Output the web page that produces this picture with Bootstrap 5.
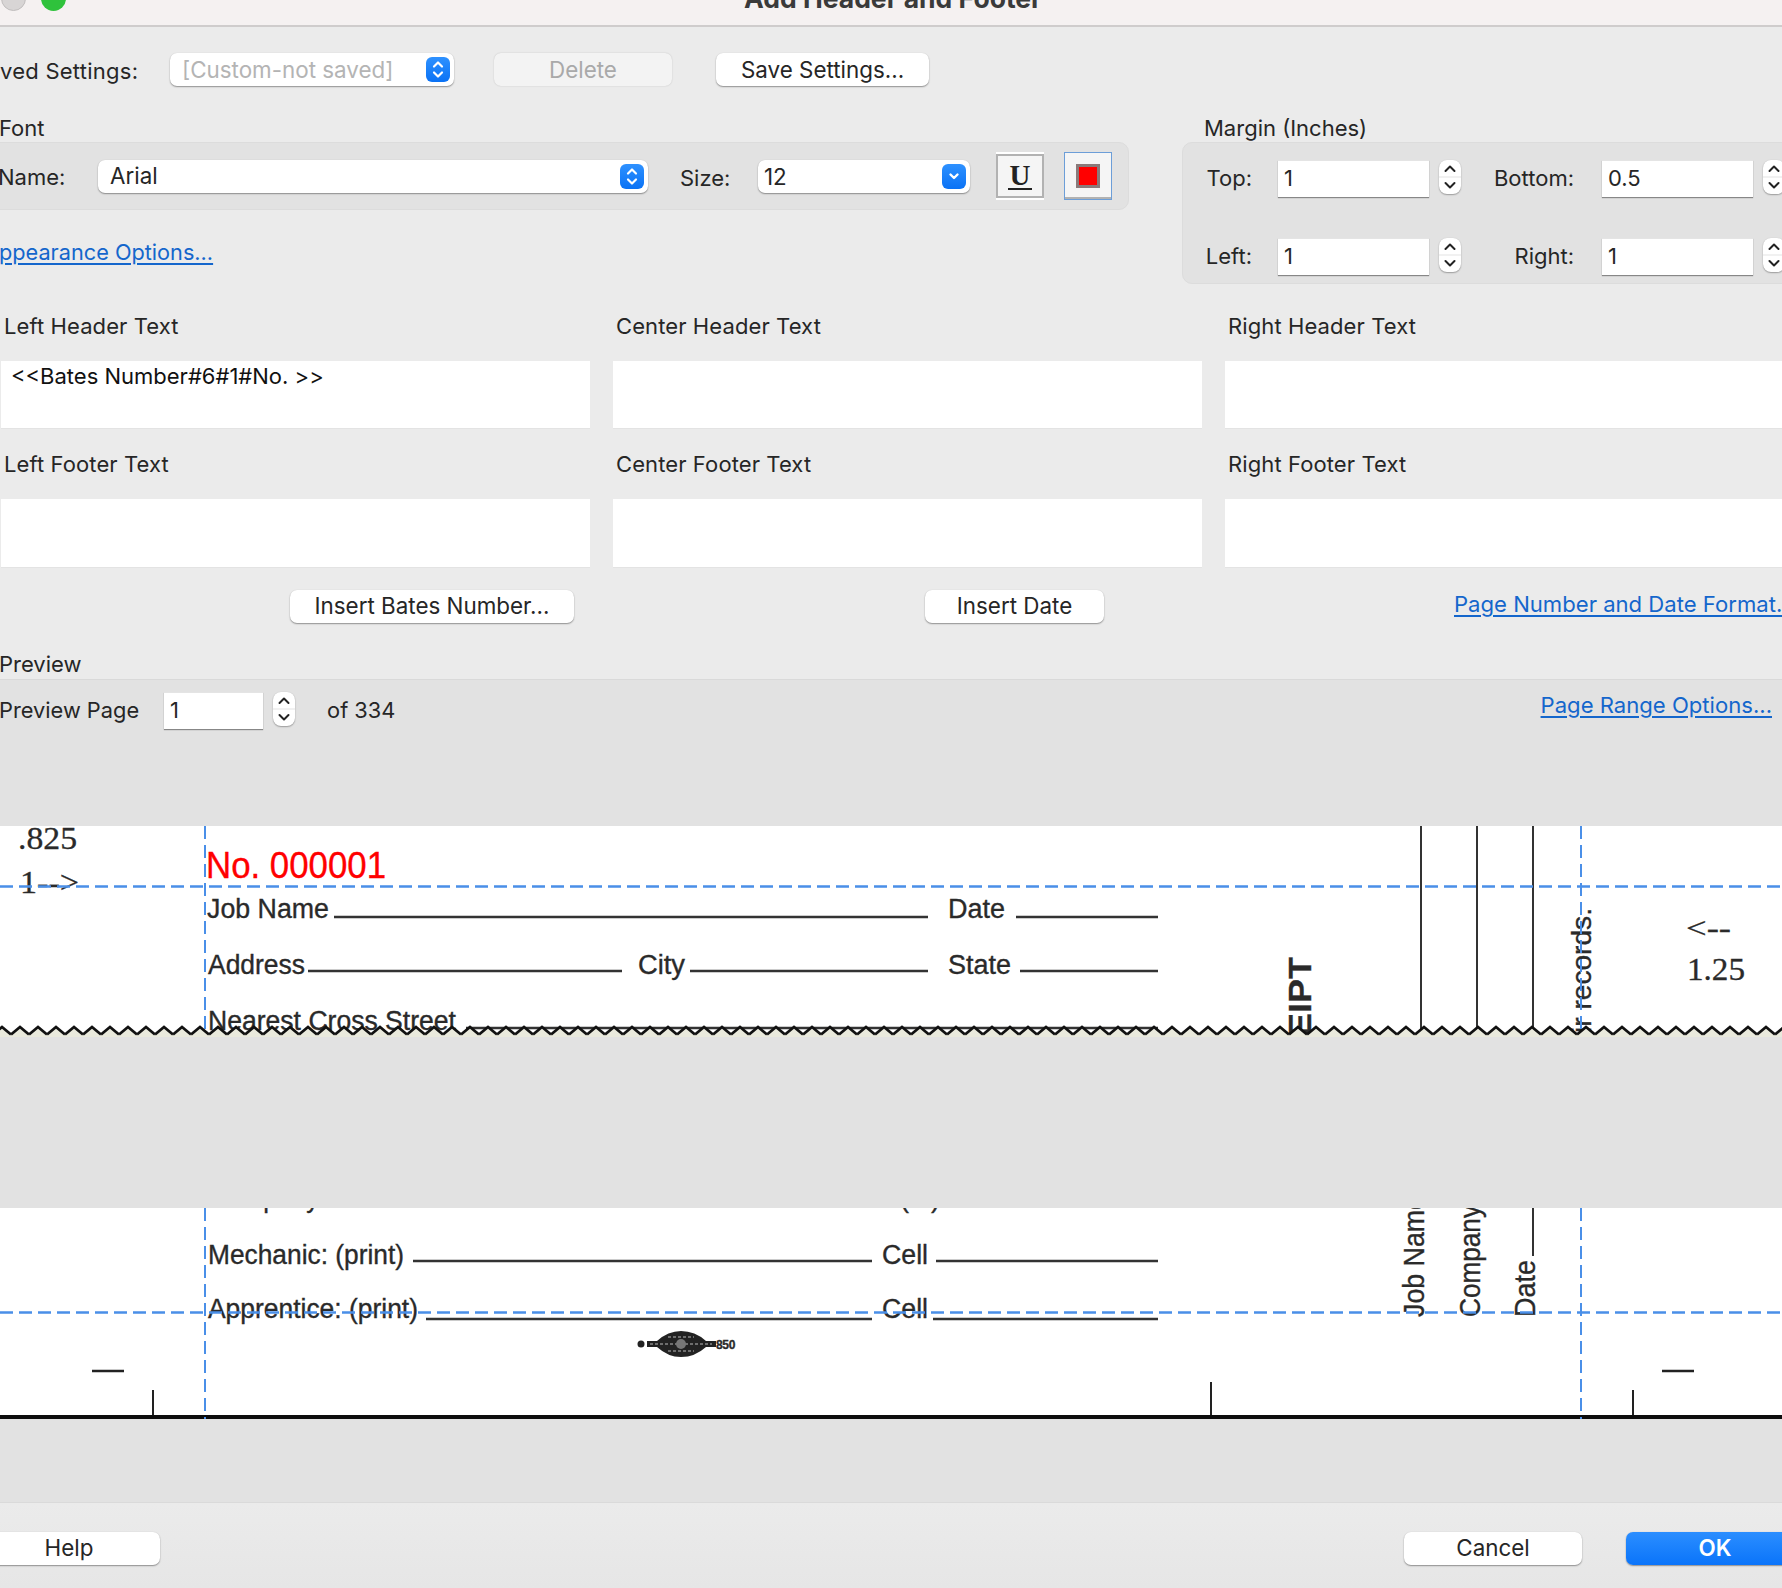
<!DOCTYPE html>
<html lang="en">
<head>
<meta charset="utf-8">
<title>Add Header and Footer</title>
<link href="https://cdn.jsdelivr.net/npm/bootstrap@5.3.0/dist/css/bootstrap.min.css" rel="stylesheet">
<style>
html,body{margin:0;width:1782px;height:1588px;overflow:hidden;background:#ebebeb;}
body{font-family:Inter,"Liberation Sans",sans-serif;font-size:22px;color:#262626;line-height:1.2;}
.dlg-title{height:27px;background:#f5f1f1;border-bottom:2px solid #cfcccc;position:relative;overflow:hidden;}
.dlg-title-text{font-weight:700;font-size:26.500px;color:#3a3a3a;line-height:26px;margin-top:-15px;text-align:center;padding-left:4px;}
.light{position:absolute;width:25px;height:25px;border-radius:50%;top:-14px;}
.light-a{left:1px;background:#d8d5d5;border:1px solid #c0bdbd;}
.light-b{left:41px;background:#2fc23c;}
.top-row{height:33px;margin-top:26px;}
.top-row .mac-btn{padding-top:2px;}
.top-row .popup{padding-top:0;}
.top-row .popup-off{padding-top:2px;}
.lbl-saved{width:170px;padding-top:4px;letter-spacing:.25px;}
.mac-btn{display:flex;flex:none;align-items:center;justify-content:center;height:33px;background:#fff;color:#262626;border:0;border-radius:7px;padding:0;font-size:22.400px;white-space:nowrap;box-shadow:0 1px 1.500px rgba(0,0,0,.38),0 0 1px rgba(0,0,0,.12);}
.mac-btn:disabled{background:#f3f3f3;color:#a9a9a9;opacity:1;box-shadow:0 0 1.500px rgba(0,0,0,.2);}
.w-saved{width:284px;}.w-del{width:178px;margin-left:40px;}.w-save{width:213px;margin-left:44px;}
.popup{justify-content:space-between;padding:0 4px 0 12px;}
.popup-off{color:#b4b4b4;}
.blue-cap{width:24px;height:25px;border-radius:6px;background:linear-gradient(#2e91ff,#0a72f5);display:flex;align-items:center;justify-content:center;}
.mid-row{margin-top:30px;}
.col-font{width:1129px;flex:none;}
.sec-lbl{height:26px;line-height:24px;}
.font-lbl{margin-left:-1px;}
.font-panel{height:68px;margin-left:-11px;padding-left:10px;background:#e2e2e2;border:1px solid #dcdcdc;border-radius:10px;}
.name-lbl{width:100px;margin-left:-2px;padding-top:3px;}
.w-name{width:550px;}
.w-name span:first-child{padding-top:1px;}
.size-lbl{margin-left:32px;width:78px;padding-top:4px;}
.w-size{width:212px;padding-left:2px;}
.size-val{padding-left:4px;padding-top:3px;}
.tool-btn{width:48px;height:48px;background:#f5f5f5;display:flex;flex-direction:column;align-items:center;justify-content:center;padding:0;flex:none;}
.tool-u{margin-left:26px;border:0;border-top:2px solid #fff;border-bottom:2px solid #fff;box-shadow:inset 0 0 0 2px #b2b2b2;}
.tool-u-glyph{font-family:"Liberation Serif",serif;font-weight:700;font-size:29px;line-height:25px;color:#222;border-bottom:2px solid #222;width:24px;text-align:center;}
.tool-c{margin-left:20px;border:1px solid #6c9ed8;box-shadow:inset 0 -2px 0 #b2b2b2;}
.swatch{width:24px;height:24px;background:#f00;border:3px solid #8a7a7a;}
.app-link{display:block;margin-top:29px;margin-left:-1px;line-height:26px;font-size:21.700px;}
a.lnk{color:#1466cc;text-decoration:underline;text-underline-offset:3px;white-space:nowrap;}
.col-margin{margin-left:53px;width:640px;flex:none;}
.margin-head{padding-left:22px;}
.margin-panel{height:142px;background:#e2e2e2;border:1px solid #dcdcdc;border-radius:10px 0 0 10px;padding-top:17px;display:grid;grid-template-columns:69px 177px 32px 115px 177px 32px;row-gap:41px;align-content:start;}
.m-lbl{text-align:right;line-height:37px;}
.m-lbl-r{padding-right:2px;}
.m-input,.p-input{height:37px;background:#fff;box-shadow:0 1px 1px rgba(0,0,0,.4),inset 0 1px 0 #e4e4e4;padding-left:6px;line-height:37px;}
.m-input{width:151px;margin-left:26px;}
.stepper{width:22px;height:34px;background:#fff;border-radius:8px;box-shadow:0 1px 1.500px rgba(0,0,0,.3),0 0 1px rgba(0,0,0,.15);display:block;flex:none;}
.m-step{margin-left:10px;}
.text-grid{display:grid;grid-template-columns:589px 589px 589px;column-gap:23px;margin-left:1px;}
.text-lbl{height:28px;line-height:28px;padding-left:3px;letter-spacing:.1px;}
.hdr-grid{margin-top:28px;}
.ftr-grid{margin-top:21px;}
.text-box{background:#fff;color:#111;padding:2px 10px;border-bottom:1px solid #e3e3e3;margin-top:21px;line-height:26px;}
.tb-h{height:68px;}.tb-f{height:69px;}
.act-row{margin-top:22px;height:33px;}
.w-bates{width:284px;margin-left:290px;}
.w-date{width:179px;margin-left:351px;}
.act-row .lnk{margin-left:350px;margin-top:-4px;font-size:22.100px;}
.prev-lbl{margin-top:29px;height:27px;line-height:24px;margin-left:-1px;}
.prev-panel{height:823px;background:#e2e2e2;border-top:1px solid #d9d9d9;}
.prev-row{padding-top:12px;height:146px;}
.pg-first{margin-left:-1px;font-size:21.800px;}
.p-input{width:99px;margin-left:25px;flex:none;}
.p-step{margin-left:10px;}
.of-lbl{margin-left:32px;font-size:21.800px;}
.pg-lbl{line-height:37px;}
.prev-row .lnk{margin-left:auto;margin-right:10px;margin-top:-5px;font-size:22.100px;}
.slice{display:block;}
.slice-gap{height:171px;}
.foot{height:86px;background:linear-gradient(#ebebeb,#e6e6e6);border-top:1px solid #dadada;padding-top:29px;}
.w-help{width:182px;margin-left:-22px;}
.w-cancel{width:178px;margin-left:auto;}
.w-ok{width:200px;margin-left:44px;margin-right:-44px;background:linear-gradient(#2b8eff,#0a74fa);color:#fff;font-weight:600;padding-right:22px;}
.pdf-a{font-family:"Liberation Sans",sans-serif;fill:#2a2a2a;stroke:#2a2a2a;stroke-width:.35px;}
.pdf-s{font-family:"Liberation Serif",serif;fill:#2a2a2a;stroke:#2a2a2a;stroke-width:.3px;}
.pdf-red{fill:#f00;stroke:#f00;}
.pdf-logo{font-size:12px;font-weight:700;letter-spacing:-.3px;}
</style>
</head>
<body>
<svg width="0" height="0" class="position-absolute">
  <symbol id="updown" viewBox="0 0 24 25"><path d="M8 9.500 12 5.500l4 4M8 15.500l4 4 4-4" fill="none" stroke="#fff" stroke-width="2.200" stroke-linecap="round" stroke-linejoin="round"/></symbol>
  <symbol id="down" viewBox="0 0 24 25"><path d="M8.500 10.500l3.500 3.500 3.500-3.500" fill="none" stroke="#fff" stroke-width="2.400" stroke-linecap="round" stroke-linejoin="round"/></symbol>
  <symbol id="step" viewBox="0 0 22 34"><path d="M6.500 11 11 6.500l4.500 4.500M6.500 23l4.500 4.500 4.500-4.500" fill="none" stroke="#222" stroke-width="2" stroke-linecap="round" stroke-linejoin="round"/><path d="M0 17h22" stroke="#ececec" stroke-width="1.500"/></symbol>
</svg>

<div class="dlg-title">
  <span class="light light-a"></span><span class="light light-b"></span>
  <div class="dlg-title-text">Add Header and Footer</div>
</div>

<div class="d-flex align-items-center top-row">
  <div class="lbl-saved">ved Settings:</div>
  <div class="mac-btn popup w-saved"><span class="popup-off">[Custom-not saved]</span><span class="blue-cap"><svg width="24" height="25"><use href="#updown"/></svg></span></div>
  <button class="mac-btn w-del" disabled>Delete</button>
  <button class="mac-btn w-save">Save Settings...</button>
</div>

<div class="d-flex mid-row">
  <div class="col-font">
    <div class="sec-lbl font-lbl">Font</div>
    <div class="font-panel d-flex align-items-center">
      <div class="name-lbl">Name:</div>
      <div class="mac-btn popup w-name"><span>Arial</span><span class="blue-cap"><svg width="24" height="25"><use href="#updown"/></svg></span></div>
      <div class="size-lbl">Size:</div>
      <div class="mac-btn popup w-size"><span class="size-val">12</span><span class="blue-cap"><svg width="24" height="25"><use href="#down"/></svg></span></div>
      <div class="tool-btn tool-u"><span class="tool-u-glyph">U</span></div>
      <div class="tool-btn tool-c"><span class="swatch"></span></div>
    </div>
    <a class="lnk app-link" href="#">ppearance Options...</a>
  </div>
  <div class="col-margin">
    <div class="sec-lbl margin-head">Margin (Inches)</div>
    <div class="margin-panel">
      <div class="m-lbl">Top:</div><div class="m-input">1</div><div class="m-step"><svg class="stepper"><use href="#step"/></svg></div>
      <div class="m-lbl m-lbl-r">Bottom:</div><div class="m-input">0.5</div><div class="m-step"><svg class="stepper"><use href="#step"/></svg></div>
      <div class="m-lbl">Left:</div><div class="m-input">1</div><div class="m-step"><svg class="stepper"><use href="#step"/></svg></div>
      <div class="m-lbl m-lbl-r">Right:</div><div class="m-input">1</div><div class="m-step"><svg class="stepper"><use href="#step"/></svg></div>
    </div>
  </div>
</div>

<div class="text-grid hdr-grid">
  <div><div class="text-lbl">Left Header Text</div><div class="text-box tb-h">&lt;&lt;Bates Number#6#1#No. &gt;&gt;</div></div>
  <div><div class="text-lbl">Center Header Text</div><div class="text-box tb-h"></div></div>
  <div><div class="text-lbl">Right Header Text</div><div class="text-box tb-h"></div></div>
</div>
<div class="text-grid ftr-grid">
  <div><div class="text-lbl">Left Footer Text</div><div class="text-box tb-f"></div></div>
  <div><div class="text-lbl">Center Footer Text</div><div class="text-box tb-f"></div></div>
  <div><div class="text-lbl">Right Footer Text</div><div class="text-box tb-f"></div></div>
</div>

<div class="d-flex align-items-center act-row">
  <button class="mac-btn w-bates">Insert Bates Number...</button>
  <button class="mac-btn w-date">Insert Date</button>
  <a class="lnk" href="#">Page Number and Date Format...</a>
</div>

<div class="prev-lbl">Preview</div>
<div class="prev-panel">
  <div class="d-flex align-items-start prev-row">
    <div class="pg-lbl pg-first">Preview Page</div>
    <div class="p-input">1</div>
    <svg class="stepper p-step"><use href="#step"/></svg>
    <div class="of-lbl pg-lbl">of 334</div>
    <a class="lnk pg-lbl" href="#">Page Range Options...</a>
  </div>

  <svg class="slice" width="1782" height="211" viewBox="0 826 1782 211" style="background:#fff">
    <defs>
      <pattern id="zig" patternUnits="userSpaceOnUse" x="-7" y="1024" width="18" height="14">
        <path d="M0 10.500 9 3 18 10.500V14H0Z" fill="#e9e9dc"/>
        <path d="M0 10.500 9 3 18 10.500" fill="none" stroke="#111" stroke-width="2.800"/>
      </pattern>
    </defs>
    <g stroke="#333" stroke-width="2"><path d="M1421 826V1030M1477 826V1030M1533 826V1030"/></g>
    <g stroke="#333" stroke-width="2.400">
      <path d="M334 917H928M1016 917H1158M308 971H622M690 971H928M1020 971H1158M466 1028H1158"/>
    </g>
    <text class="pdf-s" x="18" y="849" font-size="31" textLength="59" lengthAdjust="spacingAndGlyphs">.825</text>
    <text class="pdf-s" x="20" y="893" font-size="31" textLength="59" lengthAdjust="spacingAndGlyphs">1--&gt;</text>
    <text class="pdf-a pdf-red" x="206" y="878" font-size="36" textLength="180" lengthAdjust="spacingAndGlyphs">No. 000001</text>
    <text class="pdf-a" x="207" y="918" font-size="27" textLength="122" lengthAdjust="spacingAndGlyphs">Job Name</text>
    <text class="pdf-a" x="948" y="918" font-size="27" textLength="57" lengthAdjust="spacingAndGlyphs">Date</text>
    <text class="pdf-a" x="208" y="974" font-size="27" textLength="97" lengthAdjust="spacingAndGlyphs">Address</text>
    <text class="pdf-a" x="638" y="974" font-size="27" textLength="47" lengthAdjust="spacingAndGlyphs">City</text>
    <text class="pdf-a" x="948" y="974" font-size="27" textLength="63" lengthAdjust="spacingAndGlyphs">State</text>
    <text class="pdf-a" x="208" y="1030" font-size="27" textLength="248" lengthAdjust="spacingAndGlyphs">Nearest Cross Street</text>
    <text class="pdf-s" x="1686" y="938" font-size="29" textLength="45" lengthAdjust="spacingAndGlyphs">&lt;--</text>
    <text class="pdf-s" x="1687" y="980" font-size="31" textLength="58" lengthAdjust="spacingAndGlyphs">1.25</text>
    <text class="pdf-a" transform="translate(1311 1037) rotate(-90)" font-size="32" font-weight="700" textLength="80" lengthAdjust="spacingAndGlyphs">EIPT</text>
    <text class="pdf-a" transform="translate(1591 1033) rotate(-90)" font-size="27" textLength="125" lengthAdjust="spacingAndGlyphs">ir records.</text>
    <path d="M0 886.500H1782" stroke="#4a8fe8" stroke-width="2.500" stroke-dasharray="13 6"/>
    <path d="M205 826V1037M1581 826V1037" stroke="#4a8fe8" stroke-width="2" stroke-dasharray="13 6"/>
    <rect x="0" y="1024" width="1782" height="14" fill="url(#zig)"/>
  </svg>

  <div class="slice-gap"></div>

  <svg class="slice" width="1782" height="211" viewBox="0 1208 1782 211" style="background:#fff">
    <text class="pdf-a" x="209" y="1207" font-size="27" textLength="110" lengthAdjust="spacingAndGlyphs">Company</text>
    <text class="pdf-a" x="900" y="1207" font-size="27" textLength="40" lengthAdjust="spacing">(  )</text>
    <g stroke="#333" stroke-width="2.400">
      <path d="M413 1261H872M936 1261H1158M426 1319H872M933 1319H1158"/>
    </g>
    <path d="M1533 1208V1256" stroke="#333" stroke-width="2"/>
    <text class="pdf-a" x="208" y="1264" font-size="27" textLength="196" lengthAdjust="spacingAndGlyphs">Mechanic: (print)</text>
    <text class="pdf-a" x="882" y="1264" font-size="27" textLength="46" lengthAdjust="spacingAndGlyphs">Cell</text>
    <text class="pdf-a" x="208" y="1318" font-size="27" textLength="210" lengthAdjust="spacingAndGlyphs">Apprentice: (print)</text>
    <text class="pdf-a" x="882" y="1318" font-size="27" textLength="46" lengthAdjust="spacingAndGlyphs">Cell</text>
    <text class="pdf-a" transform="translate(1424 1317) rotate(-90)" font-size="29" textLength="122" lengthAdjust="spacingAndGlyphs">Job Name</text>
    <text class="pdf-a" transform="translate(1480 1317) rotate(-90)" font-size="29" textLength="112" lengthAdjust="spacingAndGlyphs">Company</text>
    <text class="pdf-a" transform="translate(1535 1317) rotate(-90)" font-size="29" textLength="57" lengthAdjust="spacingAndGlyphs">Date</text>
    <circle cx="641" cy="1344" r="3.500" fill="#222"/>
    <path d="M647 1341H657Q668 1331 681 1331Q695 1331 706 1341H716V1347H706Q695 1357 681 1357Q668 1357 657 1347H647Z" fill="#222"/>
    <g stroke="#888" stroke-width="1.500" stroke-dasharray="3 2" fill="none"><path d="M650 1344H712"/><path d="M668 1337H694M668 1351H694"/></g>
    <circle cx="681" cy="1344" r="5" fill="#777"/>
    <text class="pdf-a pdf-logo" x="716" y="1349">850</text>
    <g stroke="#222" stroke-width="2.400"><path d="M92 1371H124M1662 1371H1694"/></g>
    <g stroke="#222" stroke-width="2"><path d="M153 1390V1415M1211 1382V1415M1633 1390V1415"/></g>
    <path d="M0 1312.500H1782" stroke="#4a8fe8" stroke-width="2.500" stroke-dasharray="13 6"/>
    <rect x="0" y="1415" width="1782" height="4" fill="#0d0d0d"/>
    <path d="M205 1208V1419M1581 1208V1419" stroke="#4a8fe8" stroke-width="2" stroke-dasharray="13 6"/>
  </svg>
</div>

<div class="foot d-flex">
  <button class="mac-btn w-help">Help</button>
  <button class="mac-btn w-cancel">Cancel</button>
  <button class="mac-btn w-ok">OK</button>
</div>
<script src="https://cdn.jsdelivr.net/npm/bootstrap@5.3.0/dist/js/bootstrap.bundle.min.js"></script>
</body>
</html>
